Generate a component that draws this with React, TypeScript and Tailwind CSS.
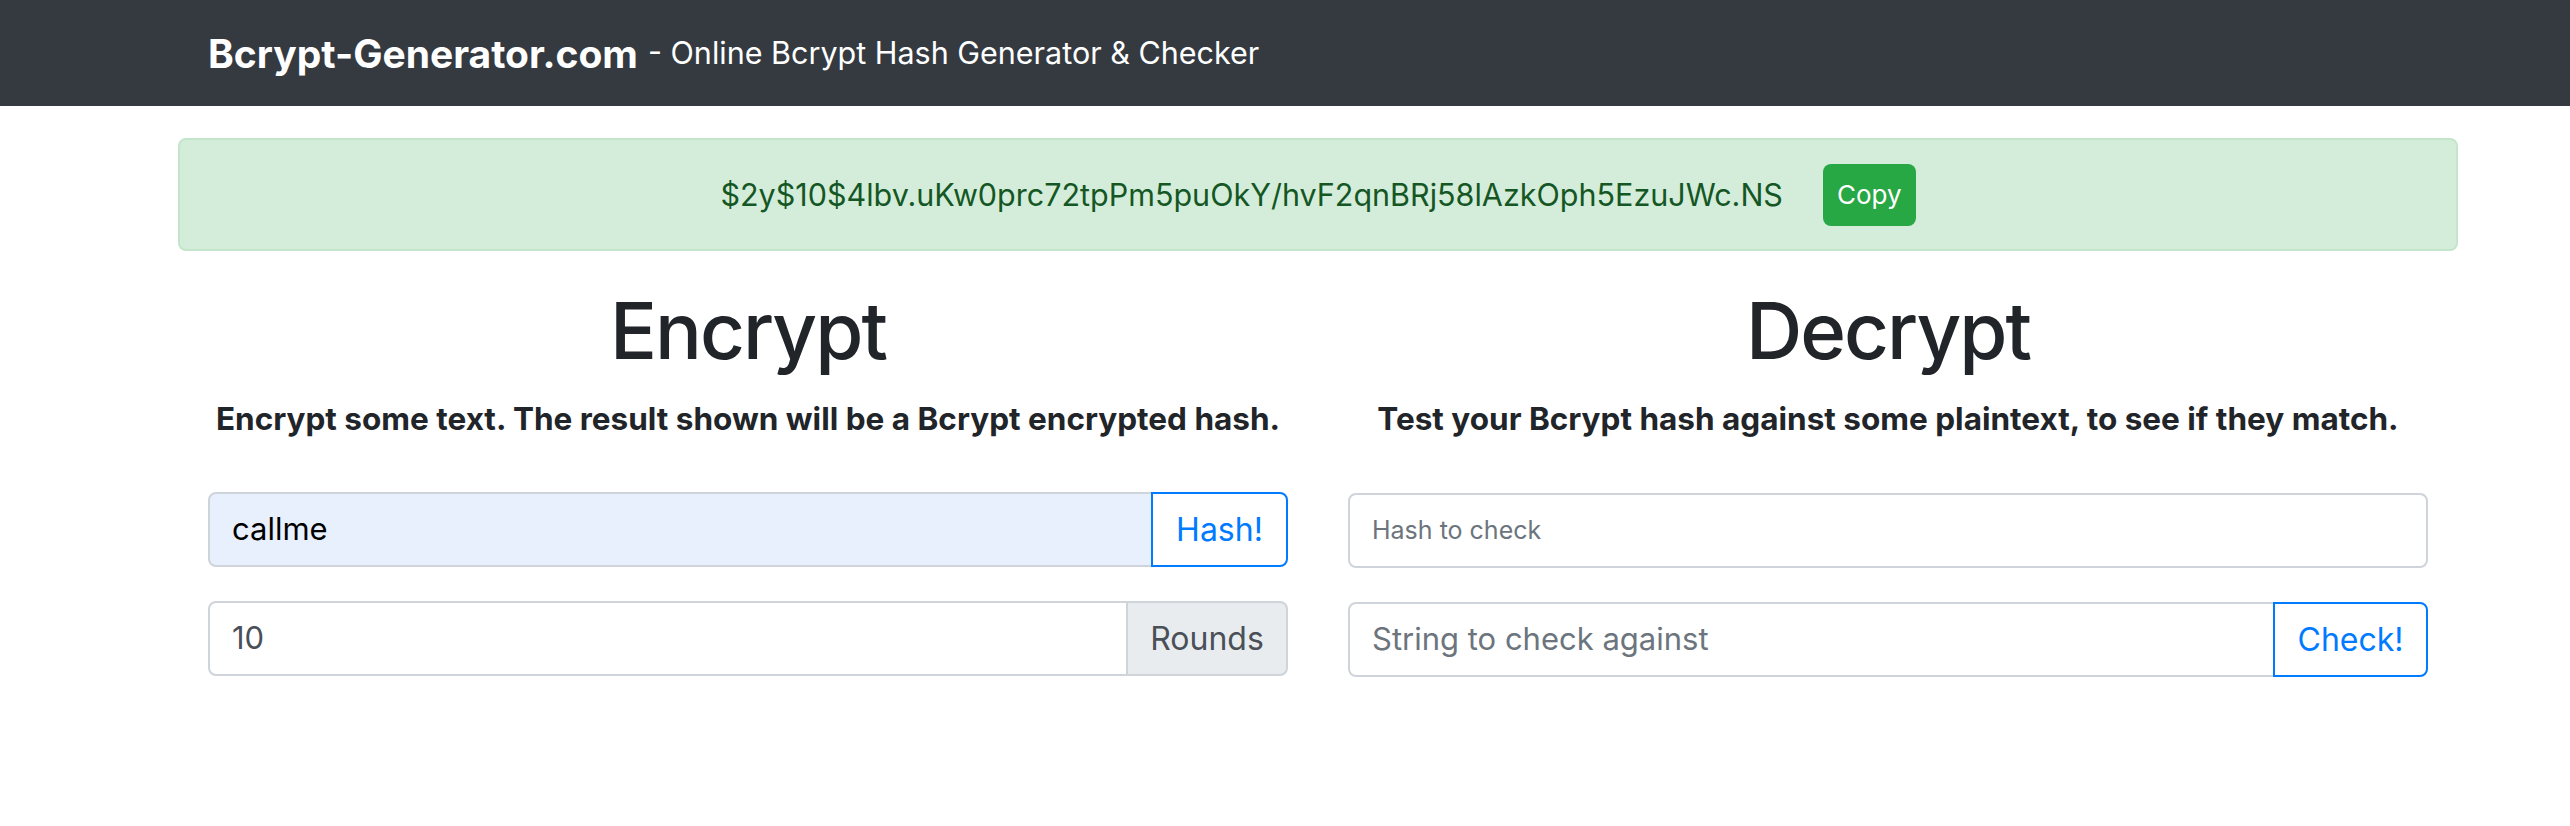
import React from "react";

const HASH = "$2y$10$4lbv.uKw0prc72tpPm5puOkY/hvF2qnBRj58lAzkOph5EzuJWc.NS";

// One bordered input with an optional attached piece on the right
const InputGroup: React.FC<{
  value?: string;
  placeholder?: string;
  autofilled?: boolean;
  small?: boolean;
  append?: React.ReactNode;
}> = ({ value, placeholder, autofilled, small, append }) => {
  return (
    <div className="flex h-[75px] w-full">
      <input
        readOnly
        defaultValue={value}
        placeholder={placeholder}
        className={
          "min-w-0 flex-1 border-2 border-[#ced4da] px-[22px] outline-none placeholder:text-[#6c757d] " +
          (append ? "rounded-l-[8px] " : "rounded-[8px] ") +
          (autofilled ? "bg-[#e8f0fe] text-black " : "bg-white text-[#495057] ") +
          (small ? "text-[25px]" : "text-[31px]")
        }
      />
      {append}
    </div>
  );
};

const OutlineButton: React.FC<{ label: string; width: string }> = ({ label, width }) => (
  <button
    className={
      "-ml-[2px] rounded-r-[8px] border-2 border-[#007bff] bg-white text-[32px] text-[#007bff] " + width
    }
  >
    {label}
  </button>
);

export default function App() {
  return (
    <div className="min-h-screen bg-white font-['Inter',sans-serif] text-[#212529]">
      {/* Navbar */}
      <nav className="h-[106px] bg-[#343a40]">
        <div className="ml-[178px] flex h-full w-[2280px] items-center px-[30px] text-white">
          <span className="text-[39px] font-bold leading-none">Bcrypt-Generator.com</span>
          <span className="ml-[10px] text-[30.5px] leading-none">- Online Bcrypt Hash Generator &amp; Checker</span>
        </div>
      </nav>

      <div className="ml-[178px] w-[2280px]">
        {/* Result */}
        <div className="mt-[32px] flex h-[113px] items-center justify-center rounded-[8px] border-2 border-[#c3e6cb] bg-[#d4edda] text-[30.5px] text-[#155724]">
          <span>{HASH}</span>
          <button className="ml-[40px] h-[62px] rounded-[8px] bg-[#28a745] px-[14px] text-[26px] text-white">
            Copy
          </button>
        </div>

        <div className="grid grid-cols-2">
          {/* Encrypt */}
          <div className="px-[30px] text-center">
            <h1 className="mt-[32px] text-[78px] font-medium leading-[96px] tracking-[-2px]">Encrypt</h1>
            <p className="mt-[16px] whitespace-nowrap text-[31.5px] font-bold leading-[48px]">
              Encrypt some text. The result shown will be a Bcrypt encrypted hash.
            </p>
            <div className="mt-[49px] flex flex-col gap-[34px]">
              <InputGroup value="callme" autofilled append={<OutlineButton label="Hash!" width="w-[137px]" />} />
              <InputGroup
                value="10"
                append={
                  <span className="-ml-[2px] flex w-[162px] items-center justify-center rounded-r-[8px] border-2 border-[#ced4da] bg-[#e9ecef] text-[32px] text-[#495057]">
                    Rounds
                  </span>
                }
              />
            </div>
          </div>

          {/* Decrypt */}
          <div className="px-[30px] text-center">
            <h1 className="mt-[32px] text-[78px] font-medium leading-[96px] tracking-[-2px]">Decrypt</h1>
            <p className="mt-[16px] whitespace-nowrap text-[31.5px] font-bold leading-[48px]">
              Test your Bcrypt hash against some plaintext, to see if they match.
            </p>
            <div className="mt-[50px] flex flex-col gap-[34px]">
              <InputGroup placeholder="Hash to check" small />
              <InputGroup placeholder="String to check against" append={<OutlineButton label="Check!" width="w-[155px]" />} />
            </div>
          </div>
        </div>
      </div>
    </div>
  );
}
